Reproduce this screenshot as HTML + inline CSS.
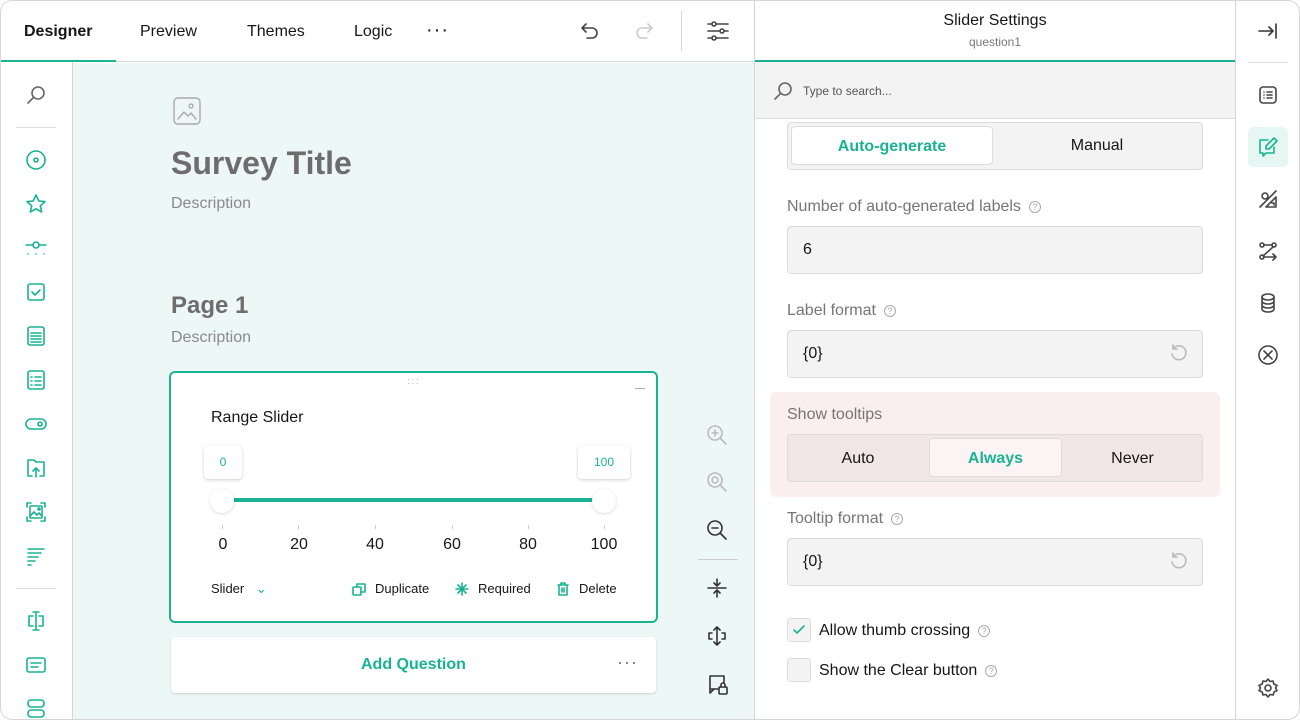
<!DOCTYPE html>
<html><head><meta charset="utf-8"><style>
*{box-sizing:border-box;margin:0;padding:0}
body{width:1300px;height:720px;overflow:hidden;background:#fff;font-family:"Liberation Sans",sans-serif;color:#161616;position:relative}
.a{position:absolute}
.frame{position:absolute;left:0;top:0;width:1300px;height:720px;border:1px solid #d6d6d6;border-radius:12px;pointer-events:none;z-index:10}
svg{position:absolute;fill:none;stroke-width:1.6;stroke-linecap:round;stroke-linejoin:round}
.g svg{stroke:#19b394}
.tab{position:absolute;top:23px;font-size:16px;color:#161616}
.fld{position:absolute;left:787px;width:416px;height:48px;background:#f3f3f3;border:1px solid #dcdcdc;border-radius:4px;font-size:16px;padding:14px 15px}
.lbl{position:absolute;left:787px;font-size:16px;color:#757575}
.q{display:inline-block;width:12px;height:12px;border:1px solid #aaa;border-radius:50%;font-size:9px;text-align:center;line-height:10px;color:#aaa;margin-left:8px;vertical-align:1px}
.tk{position:absolute;top:536px;font-size:16px;color:#161616;transform:translateX(-50%)}
.tm{position:absolute;top:525px;width:1px;height:4px;background:#ccc}
</style></head><body>
<div class="frame"></div>
<div class="a" style="left:0;top:0;width:755px;height:62px;border-bottom:1px solid #d6d6d6"></div>
<div class="tab" style="left:24px;font-weight:bold">Designer</div>
<div class="a" style="left:0;top:60px;width:116px;height:2px;background:#19b394"></div>
<div class="tab" style="left:140px">Preview</div>
<div class="tab" style="left:247px">Themes</div>
<div class="tab" style="left:354px">Logic</div>
<div class="tab" style="left:426px;top:19px;font-size:20px;letter-spacing:1px">···</div>
<svg style="left:578px;top:20px;stroke:#444" width="22" height="22" viewBox="0 0 22 22"><path d="M4 8h10a5 5 0 010 10H9M4 8l4-4M4 8l4 4"/></svg>
<svg style="left:634px;top:20px;stroke:#ccc" width="22" height="22" viewBox="0 0 22 22"><path d="M18 8H8a5 5 0 000 10h5M18 8l-4-4M18 8l-4 4"/></svg>
<div class="a" style="left:681px;top:11px;width:1px;height:40px;background:#d6d6d6"></div>
<svg style="left:706px;top:20px;stroke:#444" width="24" height="22" viewBox="0 0 24 22"><path d="M2 4h20M2 11h20M2 18h20"/><circle cx="8" cy="4" r="2" fill="#fff"/><circle cx="16" cy="11" r="2" fill="#fff"/><circle cx="8" cy="18" r="2" fill="#fff"/></svg>
<div class="a" style="left:72px;top:62px;width:1px;height:658px;background:#d6d6d6"></div>
<svg style="left:25px;top:84px;stroke:#666" width="22" height="22" viewBox="0 0 22 22"><circle cx="13" cy="9" r="6"/><path d="M8.5 13.5L3 19"/></svg>
<div class="a" style="left:16px;top:127px;width:40px;height:1px;background:#ddd"></div>
<div class="a" style="left:16px;top:588px;width:40px;height:1px;background:#ddd"></div>
<div class="g">
<svg style="left:25px;top:149px" width="22" height="22" viewBox="0 0 22 22"><circle cx="11" cy="11" r="9"/><circle cx="11" cy="11" r="2"/></svg>
<svg style="left:25px;top:193px" width="22" height="22" viewBox="0 0 22 22"><path d="M11 2l2.8 6 6.2.6-4.7 4.2 1.4 6.2L11 15.8 5.3 19l1.4-6.2L2 8.6 8.2 8z"/></svg>
<svg style="left:25px;top:237px" width="22" height="22" viewBox="0 0 22 22"><path d="M1 8h7M14 8h7M3 17h0M11 17h0M19 17h0"/><circle cx="11" cy="8" r="3"/></svg>
<svg style="left:25px;top:281px" width="22" height="22" viewBox="0 0 22 22"><rect x="3" y="3" width="16" height="16" rx="2"/><path d="M7 11l3 3 5-5"/></svg>
<svg style="left:25px;top:325px" width="22" height="22" viewBox="0 0 22 22"><rect x="3" y="2" width="16" height="18" rx="2"/><path d="M6 8h10M6 11h10M6 14h10M6 17h10"/></svg>
<svg style="left:25px;top:369px" width="22" height="22" viewBox="0 0 22 22"><rect x="3" y="2" width="16" height="18" rx="2"/><path d="M6 8h1M10 8h6M6 12h1M10 12h6M6 16h1M10 16h6"/></svg>
<svg style="left:24px;top:413px" width="24" height="22" viewBox="0 0 24 22"><rect x="2" y="6" width="20" height="10" rx="5"/><circle cx="16" cy="11" r="2"/></svg>
<svg style="left:25px;top:457px" width="22" height="22" viewBox="0 0 22 22"><path d="M7 19H3V3h6l2 2h8v14h-4M11 20v-9M8 14l3-3 3 3"/></svg>
<svg style="left:25px;top:501px" width="22" height="22" viewBox="0 0 22 22"><path d="M2 6V2h4M16 2h4v4M20 16v4h-4M6 20H2v-4"/><rect x="5" y="5" width="12" height="12" rx="1"/><path d="M5 15l4-4 3 3 2-2 3 3"/><circle cx="14" cy="8" r="1"/></svg>
<svg style="left:25px;top:545px" width="22" height="22" viewBox="0 0 22 22"><path d="M3 4h16M3 8h13M3 12h10M3 16h7M3 20h3"/></svg>
<svg style="left:25px;top:610px" width="22" height="22" viewBox="0 0 22 22"><path d="M11 2v18M8 2h6M8 20h6M8 6H4v10h4M14 6h4v10h-4"/></svg>
<svg style="left:25px;top:654px" width="22" height="22" viewBox="0 0 22 22"><rect x="2" y="4" width="18" height="14" rx="2"/><path d="M6 9h10M6 13h7"/></svg>
<svg style="left:25px;top:698px" width="22" height="22" viewBox="0 0 22 22"><rect x="3" y="2" width="16" height="7" rx="3"/><rect x="3" y="12" width="16" height="7" rx="3"/></svg>
</div>
<div class="a" style="left:73px;top:63px;width:682px;height:657px;background:#edf7f5"></div>
<div class="a" style="left:754px;top:0;width:1px;height:720px;background:#d6d6d6"></div>
<svg style="left:173px;top:97px;stroke:#aaa;stroke-width:1.4" width="28" height="28" viewBox="0 0 28 28"><rect x="1" y="1" width="26" height="26" rx="4"/><path d="M5 22l6-7 4 4 3-3 5 6"/><circle cx="18" cy="9" r="2"/></svg>
<div class="a" style="left:171px;top:145px;font-size:32px;font-weight:bold;color:#6d6d6d">Survey Title</div>
<div class="a" style="left:171px;top:195px;font-size:16px;color:#8a8a8a">Description</div>
<div class="a" style="left:171px;top:292px;font-size:24px;font-weight:bold;color:#6d6d6d">Page 1</div>
<div class="a" style="left:171px;top:329px;font-size:16px;color:#8a8a8a">Description</div>
<div class="a" style="left:169px;top:371px;width:489px;height:252px;background:#fff;border:2px solid #19b394;border-radius:6px"></div>
<div class="a" style="left:407px;top:378px;font-size:10px;color:#bbb;letter-spacing:1px;line-height:4px">···<br>···</div>
<div class="a" style="left:635px;top:388px;width:10px;height:1px;background:#aaa"></div>
<div class="a" style="left:211px;top:409px;font-size:16px">Range Slider</div>
<div class="a" style="left:204px;top:446px;width:38px;height:33px;background:#fff;border-radius:4px;box-shadow:0 1px 3px rgba(0,0,0,.2);color:#19b394;font-size:12px;text-align:center;line-height:33px">0</div>
<div class="a" style="left:578px;top:446px;width:52px;height:33px;background:#fff;border-radius:4px;box-shadow:0 1px 3px rgba(0,0,0,.2);color:#19b394;font-size:12px;text-align:center;line-height:33px">100</div>
<div class="a" style="left:228px;top:498px;width:366px;height:4px;background:#19b394"></div>
<div class="a" style="left:210px;top:489px;width:24px;height:24px;border-radius:50%;background:#fff;box-shadow:0 1px 3px rgba(0,0,0,.15)"></div>
<div class="a" style="left:592px;top:489px;width:24px;height:24px;border-radius:50%;background:#fff;box-shadow:0 1px 3px rgba(0,0,0,.15)"></div>
<div class="tm" style="left:222px"></div><div class="tm" style="left:298px"></div><div class="tm" style="left:375px"></div><div class="tm" style="left:452px"></div><div class="tm" style="left:528px"></div><div class="tm" style="left:604px"></div>
<div class="tk" style="left:223px">0</div><div class="tk" style="left:299px">20</div><div class="tk" style="left:375px">40</div><div class="tk" style="left:452px">60</div><div class="tk" style="left:528px">80</div><div class="tk" style="left:604px">100</div>
<div class="a" style="left:211px;top:581px;font-size:13px">Slider <span style="color:#19b394;margin-left:8px">⌄</span></div>
<div class="g">
<svg style="left:351px;top:581px" width="16" height="16" viewBox="0 0 16 16"><rect x="2" y="6" width="8" height="8" rx="1"/><path d="M6 6V3h8v8h-4"/></svg>
<svg style="left:454px;top:581px" width="16" height="16" viewBox="0 0 16 16"><path d="M8 2v12M2 8h12M4 4l8 8M12 4l-8 8"/></svg>
<svg style="left:555px;top:581px" width="16" height="16" viewBox="0 0 16 16"><path d="M3 4h10M6 4V2h4v2M4 4v10h8V4M7 7v4M9 7v4"/></svg>
</div>
<div class="a" style="left:375px;top:581px;font-size:13px">Duplicate</div>
<div class="a" style="left:478px;top:581px;font-size:13px">Required</div>
<div class="a" style="left:579px;top:581px;font-size:13px">Delete</div>
<div class="a" style="left:171px;top:637px;width:485px;height:56px;background:#fff;border-radius:4px;box-shadow:0 1px 2px rgba(0,0,0,.15)"></div>
<div class="a" style="left:361px;top:656px;font-size:16px;font-weight:bold;color:#19b394">Add Question</div>
<div class="a" style="left:617px;top:652px;font-size:18px;color:#777;letter-spacing:1px">···</div>
<svg style="left:706px;top:424px;stroke:#bbb" width="22" height="22" viewBox="0 0 22 22"><circle cx="9" cy="9" r="7"/><path d="M14 14l6 6M9 6v6M6 9h6"/></svg>
<svg style="left:706px;top:471px;stroke:#bbb" width="22" height="22" viewBox="0 0 22 22"><circle cx="9" cy="9" r="7"/><circle cx="9" cy="9" r="3"/><path d="M14 14l6 6"/></svg>
<svg style="left:706px;top:519px;stroke:#333" width="22" height="22" viewBox="0 0 22 22"><circle cx="9" cy="9" r="7"/><path d="M14 14l6 6M6 9h6"/></svg>
<div class="a" style="left:698px;top:559px;width:40px;height:1px;background:#ccc"></div>
<svg style="left:706px;top:577px;stroke:#333" width="22" height="22" viewBox="0 0 22 22"><path d="M2 11h18M11 2v6M8 6l3 3 3-3M11 20v-6M8 16l3-3 3 3"/></svg>
<svg style="left:706px;top:625px;stroke:#333" width="22" height="22" viewBox="0 0 22 22"><path d="M11 2v18M8 5l3-3 3 3M8 17l3 3 3-3M6 8H3v6h3M16 8h3v6h-3"/></svg>
<svg style="left:706px;top:673px;stroke:#333" width="24" height="24" viewBox="0 0 24 24"><path d="M12 16H4V3h14v6M4 16v4l4-4"/><rect x="13" y="14" width="8" height="7" rx="1"/><path d="M15 14v-2a2 2 0 014 0v2"/></svg>
<div class="a" style="left:755px;top:12px;width:480px;text-align:center;font-size:16px">Slider Settings</div>
<div class="a" style="left:755px;top:35px;width:480px;text-align:center;font-size:12px;color:#777">question1</div>
<div class="a" style="left:755px;top:60px;width:480px;height:2px;background:#19b394"></div>
<div class="a" style="left:755px;top:62px;width:480px;height:57px;background:#f3f3f3;border-bottom:1px solid #ddd"></div>
<svg style="left:772px;top:80px;stroke:#666" width="22" height="22" viewBox="0 0 22 22"><circle cx="13" cy="9" r="6"/><path d="M8.5 13.5L3 19"/></svg>
<div class="a" style="left:803px;top:84px;font-size:12px;color:#555">Type to search...</div>
<div class="a" style="left:787px;top:122px;width:416px;height:48px;background:#f3f3f3;border:1px solid #dcdcdc;border-radius:4px"></div>
<div class="a" style="left:791px;top:126px;width:202px;height:39px;background:#fff;border:1px solid #ddd;border-radius:4px;text-align:center;line-height:39px;color:#19b394;font-weight:bold;font-size:16px">Auto-generate</div>
<div class="a" style="left:995px;top:126px;width:204px;height:39px;text-align:center;line-height:39px;font-size:16px">Manual</div>
<div class="lbl" style="top:198px">Number of auto-generated labels<span class="q">?</span></div>
<div class="fld" style="top:226px">6</div>
<div class="lbl" style="top:302px">Label format<span class="q">?</span></div>
<div class="fld" style="top:330px">{0}</div>
<svg style="left:1169px;top:344px;stroke:#bbb" width="20" height="20" viewBox="0 0 20 20"><path d="M4 5a7 7 0 11-1 5M4 1v4h4"/></svg>
<div class="a" style="left:770px;top:392px;width:450px;height:105px;background:#fbeeef;border-radius:6px"></div>
<div class="lbl" style="top:406px">Show tooltips</div>
<div class="a" style="left:787px;top:434px;width:416px;height:48px;background:#f0e6e7;border:1px solid #dcdcdc;border-radius:4px"></div>
<div class="a" style="left:929px;top:438px;width:133px;height:39px;background:#fcf3f4;border:1px solid #ddd;border-radius:4px"></div>
<div class="a" style="left:791px;top:450px;width:134px;text-align:center;font-size:16px">Auto</div>
<div class="a" style="left:929px;top:450px;width:133px;text-align:center;font-size:16px;color:#19b394;font-weight:bold">Always</div>
<div class="a" style="left:1066px;top:450px;width:133px;text-align:center;font-size:16px">Never</div>
<div class="lbl" style="top:510px">Tooltip format<span class="q">?</span></div>
<div class="fld" style="top:538px">{0}</div>
<svg style="left:1169px;top:552px;stroke:#bbb" width="20" height="20" viewBox="0 0 20 20"><path d="M4 5a7 7 0 11-1 5M4 1v4h4"/></svg>
<div class="a" style="left:787px;top:618px;width:24px;height:24px;background:#f3f3f3;border:1px solid #dcdcdc;border-radius:3px"></div>
<svg style="left:791px;top:622px;stroke:#19b394" width="16" height="16" viewBox="0 0 16 16"><path d="M3 8l3 3 7-7"/></svg>
<div class="a" style="left:819px;top:622px;font-size:16px">Allow thumb crossing<span class="q">?</span></div>
<div class="a" style="left:787px;top:658px;width:24px;height:24px;background:#f3f3f3;border:1px solid #dcdcdc;border-radius:3px"></div>
<div class="a" style="left:819px;top:662px;font-size:16px">Show the Clear button<span class="q">?</span></div>
<div class="a" style="left:1235px;top:0;width:1px;height:720px;background:#d6d6d6"></div>
<svg style="left:1257px;top:20px;stroke:#333" width="22" height="22" viewBox="0 0 22 22"><path d="M2 11h14M12 7l4 4-4 4M19 4v14"/></svg>
<div class="a" style="left:1248px;top:62px;width:40px;height:1px;background:#ddd"></div>
<svg style="left:1257px;top:84px;stroke:#444" width="22" height="22" viewBox="0 0 22 22"><rect x="3" y="3" width="16" height="16" rx="3"/><path d="M7 8h0M10 8h5M7 11h0M10 11h5M7 14h0M10 14h5"/></svg>
<div class="a" style="left:1248px;top:127px;width:40px;height:40px;background:#e6f6f2;border-radius:6px"></div>
<svg style="left:1257px;top:136px;stroke:#19b394" width="22" height="22" viewBox="0 0 22 22"><path d="M11 4H3v13h3v3l3-3h8v-6M17 2l3 3-8 8H9v-3z"/></svg>
<svg style="left:1257px;top:188px;stroke:#444" width="22" height="22" viewBox="0 0 22 22"><path d="M19 9v10H9zM15 15h2v2M3 19L19 3"/><circle cx="8" cy="8" r="3"/></svg>
<svg style="left:1257px;top:240px;stroke:#444" width="22" height="22" viewBox="0 0 22 22"><circle cx="5" cy="5" r="2"/><circle cx="17" cy="5" r="2"/><circle cx="5" cy="17" r="2"/><path d="M7 5h8M16 7L6 16M7 17h12M16 14l3 3-3 3"/></svg>
<svg style="left:1257px;top:292px;stroke:#444" width="22" height="22" viewBox="0 0 22 22"><ellipse cx="11" cy="5" rx="6" ry="3"/><path d="M5 5v12c0 1.7 2.7 3 6 3s6-1.3 6-3V5M5 9c0 1.7 2.7 3 6 3s6-1.3 6-3M5 13c0 1.7 2.7 3 6 3s6-1.3 6-3"/></svg>
<svg style="left:1257px;top:344px;stroke:#444" width="22" height="22" viewBox="0 0 22 22"><circle cx="11" cy="11" r="9"/><path d="M7 7l8 8M15 7l-8 8"/></svg>
<svg style="left:1257px;top:677px;stroke:#444" width="22" height="22" viewBox="0 0 22 22"><circle cx="11" cy="11" r="3"/><path d="M11 2l2 2.5 3-.5.8 3L20 8.5 18.5 11l1.5 2.5-3 1.5-.8 3-3-.5L11 20l-2-2.5-3 .5-.8-3L2 13.5 3.5 11 2 8.5 5.2 7 6 4l3 .5z"/></svg>
</body></html>
